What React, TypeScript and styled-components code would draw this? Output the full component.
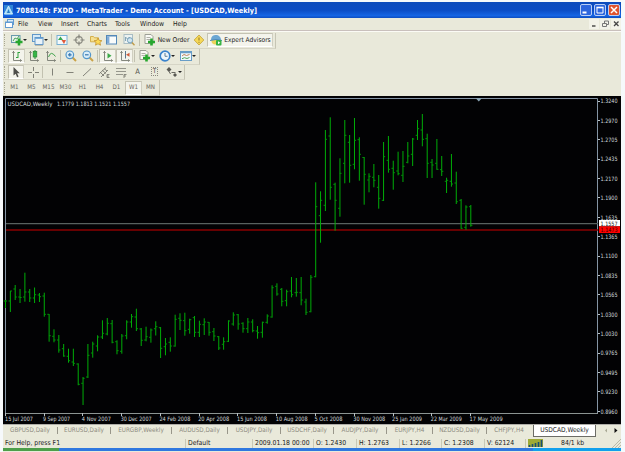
import * as React from 'react'
import styled, { createGlobalStyle } from 'styled-components'

const face = '"DejaVu Sans Condensed", "DejaVu Sans", sans-serif'

const GlobalStyle = createGlobalStyle`
  body {
    margin: 0;
    background: #f6f9fb;
    overflow: hidden;
    font-family: ${face};
    font-stretch: condensed;
    text-rendering: geometricPrecision;
  }
`

// open / high / low / close of every week, in chart units
const bars = [
  [301, 300, 308, 301], [301, 291, 312, 291], [289, 285, 300, 297], [297, 289, 303, 297.5],
  [297, 272.7, 301.7, 292], [292, 289, 302, 298], [298, 287.5, 303, 294.7], [295, 293, 302, 296.7],
  [296, 292.7, 316.7, 314.3], [314.3, 314, 341.7, 335.7], [336.3, 329.3, 342.3, 340], [340, 335, 352.7, 350],
  [348.7, 344, 356.7, 356], [356.3, 348.7, 362.7, 360.7], [362, 348.7, 366, 363.3], [364, 363.3, 385.3, 384.3],
  [383.3, 377, 405, 378.3], [377, 344, 378, 355.3], [353, 341.7, 357.7, 344], [346, 335.3, 351.3, 337],
  [337, 320.3, 339, 333.3], [334, 318, 335.3, 323.3], [323.7, 320, 343.3, 342.3], [341.7, 340.3, 354.3, 350.7],
  [351.3, 334, 353.7, 336], [335.7, 320.3, 339.3, 322], [322, 314, 327.7, 316.7], [317, 308.7, 331, 328.7],
  [329, 328, 346, 340.3], [340, 326.7, 341.3, 336.7], [337.3, 328.5, 342.7, 330], [328.7, 321.3, 335.5, 326.7],
  [327.7, 327, 358, 348.3], [346.7, 338, 355.3, 344], [342.3, 337.3, 351.7, 346], [346, 314.7, 346.7, 319.3],
  [318.3, 313.3, 330, 320.3], [320.7, 312.7, 335.7, 330.7], [329.3, 318.7, 333.7, 319.7], [317.7, 316, 337, 332.3],
  [332.3, 320.7, 337, 324.3], [324.7, 318.3, 335, 322], [322.3, 322, 335.7, 332.3], [331.7, 328, 341, 336],
  [336.7, 336, 350, 348], [344.3, 337.3, 349.7, 341.7], [341.3, 320.3, 342, 321], [324, 312.3, 325.7, 315],
  [314.7, 314, 329.7, 324], [323.3, 322.3, 332.7, 328.7], [328.7, 318, 333, 322], [322, 319.3, 332.3, 330.7],
  [331, 326, 338.7, 332.7], [332.3, 321.7, 337.7, 322.3], [322.3, 314.3, 323.7, 316], [317, 285.3, 317.7, 287.7],
  [286.3, 283.3, 295.7, 294], [289.3, 288, 306.3, 301.3], [300.7, 289.7, 306.3, 291.7], [291, 277, 297.3, 294.7],
  [292.7, 278, 296.7, 292.3], [292.7, 277, 305.3, 300], [302, 298.7, 315, 312.3], [311.7, 275, 312.3, 277.3],
  [276.7, 182.3, 277.3, 206.7], [215.7, 191.3, 242.7, 200.3], [205.3, 130, 211, 139.3], [136, 117.3, 199.7, 187.3],
  [184.3, 182.7, 230.7, 200.3], [208.3, 158.3, 216.7, 173.3], [163.3, 120, 183.3, 135.3], [142.3, 135, 182.7, 165.3],
  [164.3, 118, 169.3, 140.3], [139.7, 137.3, 180.7, 154.3], [157.5, 157, 204.7, 174.3], [180, 173.3, 192.3, 176.3],
  [177.3, 164, 187.3, 180.3], [187.3, 175, 208.7, 198.3], [200.3, 142, 201, 156.7], [160.3, 136, 172.7, 169.3],
  [168.3, 160.7, 189.7, 172.7], [171, 151.7, 175.3, 173.7], [175.3, 151, 182, 166.3], [162.3, 142, 163.3, 156],
  [154.3, 138, 166, 139], [135.3, 120, 140, 128.7], [130, 114, 146.3, 139.3], [138.7, 133.7, 178, 163.3],
  [162.3, 159, 178, 165], [163.3, 139, 169.7, 169.3], [169.7, 156, 176, 171.3], [181.3, 177.7, 193, 180.3],
  [181.3, 154, 186.7, 184], [183, 171.7, 204, 201.7], [200.3, 199, 228.7, 228.3], [227.3, 205.3, 229.7, 207],
  [206.7, 205, 226.7, 225.3],
]

const prices = [
  '1.3240', '1.2970', '1.2705', '1.2435', '1.2170', '1.1900', '1.1635', '1.1365', '1.1100',
  '1.0835', '1.0565', '1.0300', '1.0030', '0.9765', '0.9495', '0.9230', '0.8960',
]

const dates: [string, number][] = [
  ['15 Jul 2007', 28], ['9 Sep 2007', 27], ['4 Nov 2007', 29], ['30 Dec 2007', 31],
  ['24 Feb 2008', 31], ['20 Apr 2008', 31], ['15 Jun 2008', 30], ['10 Aug 2008', 32],
  ['5 Oct 2008', 28], ['30 Nov 2008', 32], ['25 Jan 2009', 30], ['22 Mar 2009', 31], ['17 May 2009', 33],
]

const tabs: [string, number][] = [
  ['GBPUSD,Daily', 55], ['EURUSD,Daily', 53], ['EURGBP,Weekly', 61], ['AUDUSD,Daily', 56],
  ['USDJPY,Daily', 53], ['USDCHF,Daily', 53], ['AUDJPY,Daily', 53], ['EURJPY,H4', 46],
  ['NZDUSD,Daily', 54], ['CHFJPY,H4', 45],
]

const menu: [string, number][] = [
  ['File', 20], ['View', 23], ['Insert', 26], ['Charts', 28], ['Tools', 25], ['Window', 33], ['Help', 24],
]

const STEP = 4.847
const barX = (i: number) => 2.3 + i * STEP

const Chart = () => (
  <ChartSvg width="618" height="328" viewBox="0 96 618 328">
    <rect y="96" width="618" height="328" fill="#020204" />
    <path d="M2.5 98.5H594.5V413.5H2.5Z" fill="none" stroke="#8494a4" />
    <path d="M2 413.5H595" stroke="#8c9492" />
    <path d="M472.5 98H479L475.8 101.6Z" fill="#8ba5b5" />
    <path d="M3 223.7H595" stroke="#59615f" strokeWidth="1.2" />
    <path d="M3 230H595" stroke="#8a0000" strokeWidth="1.6" />
    {bars.map(([open, high, low, close], i) => (
      <g key={i} fill="none">
        <path d={`M${barX(i) + 0.2} ${high}V${low}`} stroke="#00ae08" />
        <path
          d={`M${barX(i) - 1.6} ${open}H${barX(i)}M${barX(i)} ${close}H${barX(i) + 1.8}`}
          stroke="#009408"
        />
      </g>
    ))}
    {prices.map((price, i) => (
      <g key={price}>
        <path d={`M595 ${Math.floor(101 + i * 19.39) + 0.5}h2`} stroke="#b8c0c4" />
        <ChartText x="597.5" y={103.3 + i * 19.39} textLength="17">{price}</ChartText>
      </g>
    ))}
    {dates.map(([date, width], i) => (
      <g key={date}>
        <path d={`M${Math.floor(barX(i * 8)) + 0.5} 413v3`} stroke="#b8c0c4" />
        <ChartText x={i === 0 ? 2 : barX(i * 8) - 1} y="421" textLength={width}>{date}</ChartText>
      </g>
    ))}
    <rect x="596" y="220" width="21" height="6.3" fill="#fff" />
    <ChartText x="597.5" y="225.6" textLength="17" fill="#111">1.1557</ChartText>
    <rect x="596" y="226.3" width="21" height="6.7" fill="#f00" />
    <ChartText x="597.5" y="232" textLength="17" fill="#300">1.1473</ChartText>
    <ChartText x="4.5" y="105.7" textLength="45">USDCAD,Weekly</ChartText>
    <ChartText x="54" y="105.7" textLength="73">1.1779 1.1813 1.1521 1.1557</ChartText>
  </ChartSvg>
)

const Icon = ({ children }: { children: React.ReactNode }) => (
  <IconSvg width="14" height="14" viewBox="0 0 14 14" fill="none">{children}</IconSvg>
)

const plus = (x: number, y: number) => (
  <path d={`M${x} ${y - 3.5}v7M${x - 3.5} ${y}h7`} stroke="#12a01c" strokeWidth="2.6" />
)

const NewChart = () => (
  <Icon>
    <rect x="1.5" y="2.5" width="8.5" height="7" fill="#eaf5ef" stroke="#5d93a8" />
    <path d="M3 8l2-3 2 1 2-3" stroke="#3c9a50" />
    {plus(9, 9)}
  </Icon>
)
const Profiles = () => (
  <Icon>
    <rect x="1.5" y="1.5" width="8" height="7" fill="#d7ebfa" stroke="#5590c8" />
    <rect x="4" y="4.5" width="8" height="7" fill="#e9f4fc" stroke="#5590c8" />
    <path d="M4 5.5h8" stroke="#6ba6dd" />
    <path d="M4 12.5h8" stroke="#b8b8a8" />
  </Icon>
)
const MarketWatch = () => (
  <Icon>
    <rect x="2" y="2.5" width="10" height="9" fill="#f6fbff" stroke="#6aa9d4" />
    <path d="M3 7l2.500-3.500L8 7z" fill="#26a040" />
    <path d="M6.500 7h4.500l-2 4z" fill="#e04a28" />
  </Icon>
)
const Crosshair = () => (
  <Icon>
    <circle cx="7" cy="7" r="3.3" stroke="#85857c" strokeWidth="1.2" />
    <path d="M7 1.5v4M7 8.5v4M1.5 7h4M8.5 7h4" stroke="#77776f" strokeWidth="1.2" />
  </Icon>
)
const Navigator = () => (
  <Icon>
    <path d="M1.5 3.5h3l1 1.3h4v4h-8z" fill="#f7e08a" stroke="#d3aa3c" />
    <path d="M9 5l1.2 2.4 2.7.3-2 1.8.6 2.7L9 10.8l-2.5 1.4.6-2.7-2-1.8 2.7-.3z" fill="#ffd94a" stroke="#c0891b" strokeWidth=".8" />
  </Icon>
)
const Terminal = () => (
  <Icon>
    <rect x="1.5" y="2.5" width="10" height="8.5" fill="#fbfdff" stroke="#447fb5" />
    <path d="M1 3h11" stroke="#447fb5" />
    <rect x="2" y="3.5" width="2.4" height="7" fill="#75a5d8" />
  </Icon>
)
const Tester = () => (
  <Icon>
    <rect x="2" y="1.5" width="8.5" height="9" fill="#edf4f4" stroke="#a4b9c1" />
    <path d="M3.5 8V4l2 2 2-2v2" stroke="#7c9fb3" />
    <circle cx="8" cy="7.3" r="2.6" fill="#cfe5f3" stroke="#6d9cba" />
    <path d="M10 9.5l2.5 2.8" stroke="#bd963c" strokeWidth="1.4" />
  </Icon>
)
const Order = () => (
  <Icon>
    <path d="M2 1.5h6l2 2v7H2z" fill="#fcfcf8" stroke="#95998f" />
    <path d="M3.5 4.5h4M3.5 6.5h4" stroke="#a9aaa4" />
    {plus(8.5, 9)}
  </Icon>
)
const Alert = () => (
  <Icon>
    <path d="M7 2l4.8 5L7 12 2.2 7z" fill="#f8d84a" stroke="#c9a83a" />
    <path d="M7 4.5v3M7 8.8v1" stroke="#836614" />
  </Icon>
)
const Expert = () => (
  <Icon>
    <path d="M2 7C2 3 4.5 2 7 2s5 2 5 5z" fill="#5e9fd1" />
    <path d="M2 7h8v3Q6 13 3 10z" fill="#ecd04a" />
    <path d="M1 7.5q6-2 12 0" stroke="#3c7eb5" />
    <rect x="7" y="7" width="5.5" height="5.5" rx="1" fill="#22ad31" />
    <path d="M9 8.2v3l2.3-1.5z" fill="#fff" />
  </Icon>
)
const axes = <path d="M3.5 2v9.5H11.500M2.300 3.800L3.500 2.500l1.200 1.300M10.200 10.300l1.300 1.200-1.300 1.200" stroke="#6c6f66" strokeWidth=".9" />
const BarChart = () => <Icon>{axes}<path d="M8 3v6M8 3.5h2M6 8.5h2" stroke="#1b9a2c" /></Icon>
const Candles = () => (
  <Icon>
    {axes}
    <path d="M8 1v9" stroke="#128020" />
    <rect x="6.2" y="2.5" width="3.6" height="5.5" fill="#22b236" stroke="#128020" strokeWidth=".7" />
  </Icon>
)
const LineChart = () => <Icon>{axes}<path d="M4.5 8Q7 1 11.5 7.5" stroke="#2d9c3c" /></Icon>
const Zoom = ({ out }: { out?: boolean }) => (
  <Icon>
    <path d="M8.5 8.5l3.5 3.5" stroke="#c79b38" strokeWidth="2" />
    <circle cx="5.8" cy="5.8" r="3.8" fill="#d8eefc" stroke="#428dca" strokeWidth="1.2" />
    <path d={out ? 'M4 5.8h3.6' : 'M4 5.8h3.6M5.8 4v3.6'} stroke="#2469aa" strokeWidth="1.2" />
  </Icon>
)
const AutoScroll = () => <Icon>{axes}<path d="M6.5 4v5.5l4-2.7z" fill="#26a337" /></Icon>
const Shift = () => <Icon>{axes}<path d="M7.5 2v7.500" stroke="#4b6781" /><path d="M11.500 3.800v4L8 5.800z" fill="#cd4a27" /></Icon>
const Period = () => (
  <Icon>
    <circle cx="7" cy="7" r="4.8" fill="#eff8ff" stroke="#2878cb" strokeWidth="1.7" />
    <path d="M7 4v3.3h2.5" stroke="#54748e" />
  </Icon>
)
const Template = () => (
  <Icon>
    <rect x="1.5" y="2.5" width="11" height="9" fill="#f4faff" stroke="#5b95c6" />
    <path d="M1.5 3.5h11" stroke="#5b95c6" strokeWidth="1.5" />
    <path d="M3 7l2-1.5 2.5 1L10.5 5.5" stroke="#bd7a4c" />
    <path d="M3 9.7l2.5-1 2.5.8 2.5-1" stroke="#40a04e" />
  </Icon>
)
const Cursor = () => <Icon><path d="M4.5 2v8.5l2.2-1.8 1.4 3.5 1.5-.7-1.5-3.3h2.7z" fill="#3d3d3a" /></Icon>
const Cross = () => <Icon><path d="M7.500 2v4M7.500 9v4M2 7.500h4M9 7.500h4" stroke="#75756d" /></Icon>
const VLine = () => <Icon><path d="M6.5 3.5v7" stroke="#77776f" /></Icon>
const HLine = () => <Icon><path d="M3.5 7.5h7" stroke="#77776f" /></Icon>
const Trend = () => <Icon><path d="M3 11l8-7.5" stroke="#77776f" /></Icon>
const Channel = () => (
  <Icon>
    <path d="M2 9l7-6.5M4 12l7-7M3 7l4 4M5 5l4 3.5M7 3.5L10 6" stroke="#6f6f68" strokeWidth=".9" />
    <path d="M12.5 9.5H10v3h2.500M10 11h2" stroke="#65655e" strokeWidth=".8" />
  </Icon>
)
const Fibo = () => (
  <Icon>
    <path d="M2 3.5h10M2 6.500h10M2 9.500h7" stroke="#8e8e84" />
    <path d="M10 13V9.500h2.500M10 11h2" stroke="#65655e" strokeWidth=".8" />
  </Icon>
)
const Arrows = () => (
  <Icon>
    <path d="M1.500 4.500L4 2l2.500 2.500L4 7zM8 10l2-2 2 2-2 2z" fill="#4a4a45" />
    <path d="M4 6.500l1.500 2.500M6.500 7.500h4" stroke="#5b5b55" />
  </Icon>
)

const App = () => (
  <React.Fragment>
    <GlobalStyle />
    <Window>
      <TitleBar>
        <svg width="9" height="12" viewBox="0 0 9 12">
          <rect y="1" width="9" height="10" fill="#2f86d8" />
          <path d="M4.5 2L8.5 10H.5z" fill="#9bd8f5" stroke="#e6f7ff" strokeWidth=".8" />
          <path d="M4.5 5L6 9H3z" fill="#2878c4" />
        </svg>
        <Title>7088148: FXDD - MetaTrader - Demo Account - [USDCAD,Weekly]</Title>
        <WinButton><svg width="12" height="12"><path d="M2.500 8.500h4" stroke="#fff" strokeWidth="2" /></svg></WinButton>
        <WinButton><svg width="12" height="12"><path d="M3 3.500h6v5.500H3z" fill="none" stroke="#fff" /><path d="M2.500 3.500h7" stroke="#fff" strokeWidth="1.600" /></svg></WinButton>
        <WinButton $close><svg width="12" height="12"><path d="M3 3l6 6M9 3L3 9" stroke="#fff" strokeWidth="1.500" /></svg></WinButton>
      </TitleBar>
      <MenuBar>
        <svg width="12" height="12" viewBox="0 0 12 12">
          <rect x="3.5" y="1.5" width="6" height="5" fill="#d9ecfb" stroke="#609bd2" />
          <rect x="1.5" y="4" width="7" height="5.5" fill="#fff" stroke="#609bd2" />
          <path d="M1.5 4.5h7" stroke="#609bd2" />
        </svg>
        <MenuItems>
          {menu.map(([label, width]) => <MenuItem key={label} $width={width}>{label}</MenuItem>)}
        </MenuItems>
        <MdiButton><svg width="10" height="10"><path d="M3 7h3.5" stroke="#333" strokeWidth="1.3" /></svg></MdiButton>
        <MdiButton><svg width="10" height="10" fill="none" stroke="#777"><path d="M4.5 4V2h4v3.5H7M2.5 4.5h4v3h-4z" /></svg></MdiButton>
        <MdiButton><svg width="10" height="10"><path d="M3 2.500l4.500 4.500M7.500 2.500L3 7" stroke="#444" strokeWidth="1.3" /></svg></MdiButton>
      </MenuBar>
      <Toolbars>
        <ToolRow $width={273}>
          <Grip />
          <Slot $width={20}><NewChart /><Caret /></Slot>
          <Slot $width={22}><Profiles /><Caret /></Slot>
          <Divider />
          <Slot $width={17}><MarketWatch /></Slot>
          <Slot $width={17}><Crosshair /></Slot>
          <Slot $width={17}><Navigator /></Slot>
          <Slot $width={16}><Terminal /></Slot>
          <Slot $width={18}><Tester /></Slot>
          <Divider />
          <Slot $width={50}><Order /><ToolLabel>New Order</ToolLabel></Slot>
          <Slot $width={16}><Alert /></Slot>
          <Slot $width={66} $pressed><Expert /><ToolLabel>Expert Advisors</ToolLabel></Slot>
        </ToolRow>
        <ToolRow $width={197}>
          <Grip />
          <Slot $width={17} $pressed><BarChart /></Slot>
          <Slot $width={17}><Candles /></Slot>
          <Slot $width={17}><LineChart /></Slot>
          <Divider />
          <Slot $width={17}><Zoom /></Slot>
          <Slot $width={17}><Zoom out /></Slot>
          <Divider />
          <Slot $width={17} $pressed><AutoScroll /></Slot>
          <Slot $width={17} $pressed><Shift /></Slot>
          <Divider />
          <Slot $width={20}><Order /><Caret /></Slot>
          <Slot $width={21}><Period /><Caret /></Slot>
          <Slot $width={20}><Template /><Caret /></Slot>
        </ToolRow>
        <ToolRow $width={182}>
          <Grip />
          <Slot $width={16} $pressed><Cursor /></Slot>
          <Slot $width={17}><Cross /></Slot>
          <Divider />
          <Slot $width={17}><VLine /></Slot>
          <Slot $width={17}><HLine /></Slot>
          <Slot $width={17}><Trend /></Slot>
          <Slot $width={17}><Channel /></Slot>
          <Slot $width={17}><Fibo /></Slot>
          <Slot $width={17}><ToolLetter>A</ToolLetter></Slot>
          <Slot $width={17}><TextBox>T</TextBox></Slot>
          <Slot $width={20}><Arrows /><Caret /></Slot>
        </ToolRow>
        <ToolRow $width={157}>
          <Grip $tight />
          {['M1', 'M5', 'M15', 'M30', 'H1', 'H4', 'D1', 'W1', 'MN'].map(frame => (
            <Slot key={frame} $width={17} $pressed={frame === 'W1'}>
              <Frame>{frame}</Frame>
            </Slot>
          ))}
        </ToolRow>
      </Toolbars>
      <Chart />
      <TabBar>
        {tabs.map(([label, width]) => <Tab key={label} $width={width}>{label}</Tab>)}
        <ActiveTab>USDCAD,Weekly</ActiveTab>
        <TabArrows>
          <svg width="18" height="7"><path d="M7 1.500v4L5 3.500z" fill="#a8a894" /><path d="M14.500 1v5l3-2.500z" fill="#111" /></svg>
        </TabArrows>
      </TabBar>
      <StatusBar>
        <Status $width={183}>For Help, press F1</Status>
        <Status $width={67}>Default</Status>
        <Status $width={61}>2009.01.18 00:00</Status>
        <Status $width={43}>O: 1.2430</Status>
        <Status $width={43}>H: 1.2763</Status>
        <Status $width={42}>L: 1.2266</Status>
        <Status $width={43}>C: 1.2308</Status>
        <Status $width={41}>V: 62124</Status>
        <Status $width={33} $plain>
          <svg width="15" height="8">
            <rect width="15" height="8" fill="#9eaa35" />
            <path d="M1.5 6v2M4.5 5v3M7.5 4v4M10.5 3v5M13.5 1v7" stroke="#174f75" strokeWidth="1.6" />
          </svg>
        </Status>
        <Status $width={40} $plain>84/1 kb</Status>
        <Resize width="10" height="10"><path d="M1 10l9-9M4 10l6-6M7 10l3-3" stroke="#b9b9a8" /></Resize>
      </StatusBar>
      <Taskbar><Start /><Tasks /><Tray /></Taskbar>
    </Window>
  </React.Fragment>
)

const Window = styled.div`
  display: flex;
  flex-direction: column;
  width: 618px;
  height: 450px;
  margin: 2px 0 0 3px;
  background: #e9e9da;
  overflow: hidden;
  white-space: nowrap;
`

const TitleBar = styled.div`
  display: flex;
  align-items: center;
  box-sizing: border-box;
  height: 16px;
  padding: 0 1px;
  gap: 2px;
  background: linear-gradient(#0c4cbc, #0b4cc4 50%, #1565e4 85%, #0d4dc0);
`

const Title = styled.div`
  flex: 1;
  padding-left: 1px;
  color: #fff;
  font-size: 7.3px;
  font-weight: bold;
`

const WinButton = styled.div<{ $close?: boolean }>`
  display: flex;
  box-sizing: border-box;
  width: 12px;
  height: 12px;
  border: 1px solid #b9cff5;
  border-radius: 2px;
  background: ${p => (p.$close ? '#e0532d' : '#2c66dd')};

  svg {
    flex: none;
    margin: -1px;
  }
`

const MenuBar = styled.div`
  display: flex;
  align-items: center;
  box-sizing: border-box;
  height: 13px;
  padding-left: 1px;
  border-bottom: 1px solid #c9c0bc;
`

const MenuItems = styled.div`
  display: flex;
  flex: 1;
  padding-left: 2px;
`

const MenuItem = styled.div<{ $width: number }>`
  width: ${p => p.$width}px;
  color: #222;
  font-size: 6.8px;
`

const MdiButton = styled.div`
  display: flex;
  width: 10px;
  height: 10px;
  margin-left: 1px;
  background: #f3f3e9;
`

const Toolbars = styled.div`
  display: flex;
  flex-direction: column;
  height: 65px;
  padding-top: 1px;
  box-sizing: border-box;
  border-top: 1px solid #fbfbf5;
`

const ToolRow = styled.div<{ $width: number }>`
  display: flex;
  align-items: center;
  box-sizing: border-box;
  width: ${p => p.$width}px;
  height: 16px;
  border-right: 1px solid #c6c5b4;
  border-bottom: 1px solid #d6d5c6;
`

const Grip = styled.div<{ $tight?: boolean }>`
  width: 1px;
  height: 12px;
  margin: 0 ${p => (p.$tight ? 0 : 2)}px 0 1px;
  border-left: 1px dotted #a7a692;
`

const Slot = styled.div<{ $width: number, $pressed?: boolean }>`
  display: flex;
  flex: none;
  align-items: center;
  justify-content: center;
  box-sizing: border-box;
  width: ${p => p.$width}px;
  height: 14px;
  border: 1px solid transparent;
  ${p => p.$pressed && 'border-color: #c4c3b3 #d0cfc0 #fff #c4c3b3; background: #f4f4ec;'}
`

const IconSvg = styled.svg`
  flex: none;
  opacity: 0.9;
`

const Divider = styled.div`
  width: 1px;
  height: 12px;
  margin: 0 1px;
  background: #c2c1b0;
`

const Caret = styled.div`
  border: 2px solid transparent;
  border-top-color: #222;
  border-bottom: 0;
  margin-left: -1px;
`

const ToolLabel = styled.div`
  margin-left: 1px;
  color: #222;
  font-size: 6.6px;
`

const Frame = styled.div`
  color: #66665f;
  font-size: 6.2px;
`

const ToolLetter = styled.div`
  color: #4c4c48;
  font-size: 7.5px;
`

const TextBox = styled.div`
  border: 1px dotted #88887e;
  padding: 0 1px;
  color: #4c4c48;
  font-size: 6.5px;
  line-height: 7px;
`

const ChartSvg = styled.svg`
  display: block;
  flex: none;
`

const ChartText = styled.text.attrs({ lengthAdjust: 'spacingAndGlyphs' })`
  fill: ${p => p.fill || '#d4dadd'};
  font-family: ${face};
  font-stretch: condensed;
  font-size: 6px;
`

const TabBar = styled.div`
  display: flex;
  flex: none;
  box-sizing: border-box;
  height: 14px;
  border-top: 1px solid #aeada8;
`

const Tab = styled.div<{ $width: number }>`
  box-sizing: border-box;
  width: ${p => p.$width}px;
  height: 7px;
  margin-top: 2px;
  border-right: 1px solid #98968a;
  color: #8d8b80;
  font-size: 6.3px;
  line-height: 7px;
  text-align: center;

  &:nth-child(10) {
    border-color: transparent;
  }
`

const ActiveTab = styled.div`
  box-sizing: border-box;
  width: 63px;
  height: 12px;
  margin-left: 1px;
  border: 1px solid #6c6c66;
  border-top: 0;
  background: #fff;
  color: #222;
  font-size: 6.6px;
  line-height: 10px;
  text-align: center;
`

const TabArrows = styled.div`
  display: flex;
  padding: 2px 0 0 4px;
`

const StatusBar = styled.div`
  display: flex;
  flex: none;
  align-items: center;
  height: 10px;
`

const Status = styled.div<{ $width: number, $plain?: boolean }>`
  box-sizing: border-box;
  flex: none;
  width: ${p => p.$width}px;
  height: 9px;
  padding-left: 2px;
  border-right: 1px solid ${p => (p.$plain ? 'transparent' : '#c9c8b6')};
  color: #222;
  font-size: 6.8px;
  line-height: 9px;
`

const Resize = styled.svg`
  margin-left: auto;
`

const Taskbar = styled.div`
  display: flex;
  flex: none;
  height: 3px;
`

const Start = styled.div`
  width: 56px;
  background: #4d9e4a;
`

const Tasks = styled.div`
  flex: 1;
  background: #2f78df;
`

const Tray = styled.div`
  width: 88px;
  background: #12a0ec;
`

export default App
